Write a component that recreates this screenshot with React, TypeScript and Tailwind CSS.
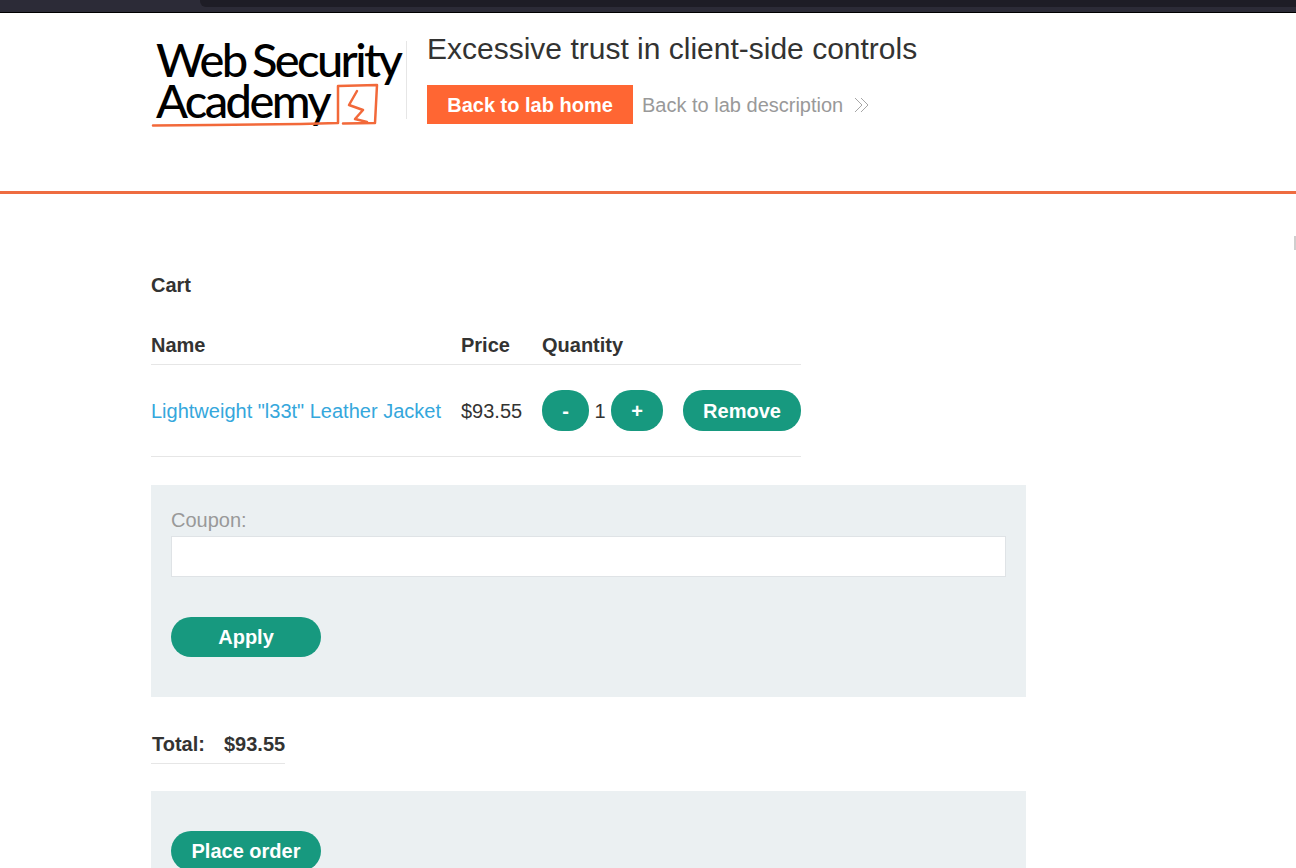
const pillClass =
  "flex items-center justify-center rounded-[20px] bg-[#17997f] font-bold text-white";

const Logo = () => (
  <div className="relative h-[78px] w-[256px] shrink-0 border-r border-[#e6e6e6] font-['Lato',sans-serif] text-black">
    <div className="-mt-[2px] whitespace-nowrap pl-[5px] text-[47px] leading-[40px] font-medium tracking-[-2.6px] [word-spacing:-3px]">
      <div>Web Security</div>
      <div className="mt-[1px]">Academy</div>
    </div>
    <svg
      className="absolute left-0 top-0"
      width="256"
      height="96"
      viewBox="0 0 256 96"
      fill="none"
      stroke="#f2693a"
      strokeWidth="2.5"
      strokeLinecap="round"
      strokeLinejoin="round"
    >
      <path d="M2 84.500 L60 84 L150 83 L187 82 L187 45 L226 44 L224 82 L192 82.500" />
      <path d="M206 50 L198 64 L212 69 L204 78 L216 81" />
    </svg>
  </div>
);

export default function App() {
  return (
    <div className="relative h-[868px] overflow-hidden bg-white font-['Liberation_Sans',Arial,sans-serif] text-[20px] text-[#333332]">
      {/* browser chrome strip left in the capture */}
      <div className="h-[13px] border-b border-black bg-[#2c2b37] pl-[200px]">
        <div className="h-[7px] rounded-bl-md bg-[#1e1d26]" />
      </div>

      <header className="flex h-[178px] items-start pl-[151px] pt-[28px]">
        <Logo />
        <div className="pl-[20px]">
          <h2 className="text-[30px] leading-[16px]">Excessive trust in client-side controls</h2>
          <div className="mt-[28px] flex items-center">
            <a className="flex h-[39px] w-[206px] items-center justify-center bg-[#ff6633] font-bold text-white">
              Back to lab home
            </a>
            <a className="ml-[9px] flex items-center text-[#999999]">
              Back to lab description
              <svg
                className="ml-[11px]"
                width="16"
                height="16"
                viewBox="0 0 16 16"
                fill="none"
                stroke="#a6a6a6"
                strokeWidth="1"
              >
                <path d="M1 1 L8 8 L1 15" />
                <path d="M7 1 L14 8 L7 15" />
              </svg>
            </a>
          </div>
        </div>
      </header>
      <div className="h-[3px] bg-[#ee6c40]" />

      <main className="pl-[151px]">
        <p className="pt-[80px] font-bold leading-[23px]">Cart</p>

        <table className="mt-[36px] w-[650px] table-fixed border-collapse">
          <thead>
            <tr className="h-[31px] border-b border-[#e6e6e6] text-left align-top font-bold">
              <th className="w-[310px] pt-[1px] leading-[23px]">Name</th>
              <th className="w-[81px] pt-[1px] leading-[23px]">Price</th>
              <th className="pt-[1px] leading-[23px]">Quantity</th>
            </tr>
          </thead>
          <tbody>
            <tr className="h-[92px] border-b border-[#e6e6e6]">
              <td className="pt-[2px] text-[#35a7dc]">Lightweight "l33t" Leather Jacket</td>
              <td className="pt-[2px]">$93.55</td>
              <td>
                <div className="flex items-center">
                  <button className={`${pillClass} h-[41px] w-[47px] pt-[2px]`}>-</button>
                  <span className="w-[22px] pt-[2px] text-center">1</span>
                  <button className={`${pillClass} h-[41px] w-[52px] pt-[2px]`}>+</button>
                  <button className={`${pillClass} ml-[20px] h-[41px] w-[118px] pt-[2px]`}>Remove</button>
                </div>
              </td>
            </tr>
          </tbody>
        </table>

        <section className="mt-[28px] h-[212px] w-[875px] bg-[#ebf0f2] px-[20px] pt-[24px]">
          <label className="mb-[4px] block leading-[23px] text-[#999999]">Coupon:</label>
          <input className="block h-[41px] w-full border border-[#dfe3e6] bg-white" />
          <button className={`${pillClass} mt-[40px] h-[40px] w-[150px]`}>Apply</button>
        </section>

        <div className="mt-[35px] flex h-[32px] w-[134px] items-start border-b border-[#e6e6e6] pl-[1px] pt-[1px] font-bold leading-[23px]">
          <span>Total:</span>
          <span className="ml-[19px]">$93.55</span>
        </div>

        <section className="mt-[27px] h-[100px] w-[875px] bg-[#ebf0f2] px-[20px] pt-[40px]">
          <button className={`${pillClass} h-[40px] w-[150px]`}>Place order</button>
        </section>
      </main>

      <div className="absolute right-0 top-[236px] h-[14px] w-[2px] bg-[#cfcfcf]" />
    </div>
  );
}
